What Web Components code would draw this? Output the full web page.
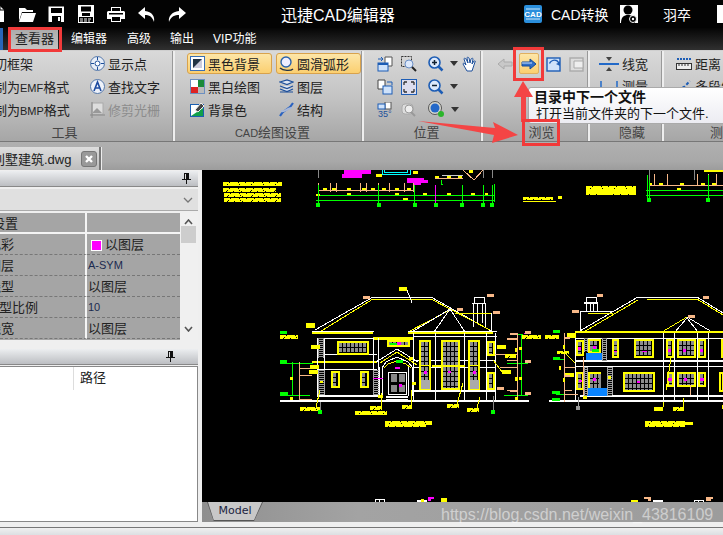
<!DOCTYPE html>
<html lang="zh">
<head>
<meta charset="utf-8">
<title>迅捷CAD编辑器</title>
<style>
    html, body { margin: 0; padding: 0; width: 723px; height: 535px; overflow: hidden; background: #e8e8e8; }
    body { font: 13px "Liberation Sans", "Noto Sans CJK SC", sans-serif; }
</style>
</head>
<body>
<cad-app></cad-app>
<script>
// Icons are plain svg strings, each one is dropped in a slot="icon".
const svg = (w, h, body) => `<svg slot="icon" width="${w}" height="${h}" viewBox="0 0 ${w} ${h}">${body}</svg>`;

const icons = {
    black: svg(15, 15, '<rect x=".5" y=".5" width="14" height="14" fill="#fff" stroke="#3a6fb5"/><rect x="3" y="3" width="9" height="9" fill="#234"/><path d="M3 12 12 3v9z" fill="#ccd"/>'),
    bw: svg(15, 15, '<rect x=".5" y=".5" width="14" height="14" fill="#fff" stroke="#6c8fc0"/><rect x="1" y="8" width="7" height="6" fill="#d22"/><rect x="8" y="1" width="6" height="7" fill="#1a8a3a"/><path d="M8 8h6v6H8z" fill="#bbb"/>'),
    bg: svg(15, 15, '<rect x=".5" y="2.5" width="13" height="12" fill="#fff" stroke="#1b5fb0"/><path d="M1 14 13 6v8z" fill="#12a04a"/><path d="M5 8 11 1l3 3-6 6z" fill="#444" stroke="#eee"/>'),
    smooth: svg(15, 16, '<path d="M1 12C4 15 12 15 14 13" fill="none" stroke="#234" stroke-width="1.4"/><circle cx="7" cy="6" r="5" fill="#eef" stroke="#2a62aa" stroke-width="1.4"/>'),
    layer: svg(15, 15, '<path d="M1 3 8 1l6 2-6 2.500zM1 7l7 2.500L14 7M1 10l7 2.500L14 10" fill="#dde6f5" stroke="#1d4f9a" stroke-width="1.300"/><path d="M1 13h13" stroke="#1d4f9a"/>'),
    dna: svg(15, 15, '<path d="M1 14C4 7 10 9 14 1" fill="none" stroke="#2a62c0" stroke-width="2"/><path d="M2 9C6 11 9 5 13 6" fill="none" stroke="#a8b8d8" stroke-width="2"/>'),
    point: svg(15, 15, '<circle cx="7.500" cy="7.500" r="7" fill="#e8eef8" stroke="#5578aa"/><circle cx="7.500" cy="7.500" r="2.500" fill="#fff" stroke="#1d4f9a"/><path d="M7.500 1v3M7.500 11v3M1 7.500h3M11 7.500h3" stroke="#1d4f9a"/>'),
    findText: svg(15, 15, '<circle cx="7.500" cy="7.500" r="7" fill="#eef2fa" stroke="#5578aa"/><path d="M4 12 7.500 3 11 12M5.500 9h4" fill="none" stroke="#1c4aa0" stroke-width="1.600"/>'),
    clip: svg(15, 16, '<rect x="2" y="1" width="11" height="11" fill="#ddd" stroke="#aaa"/><path d="M3 10 7 6l5 5H3z" fill="#999"/><path d="M0 13h15M2 0v16" stroke="#888"/>'),
    copy1: svg(16, 16, '<path d="M8 1h7v9H8z" fill="#fff" stroke="#555"/><rect x="1" y="7" width="10" height="8" fill="#cfe2fa" stroke="#1d5db5"/><rect x="1" y="7" width="10" height="2" fill="#1d5db5"/><path d="M1 3h5M4 1l2 2-2 2" fill="none" stroke="#1d5db5"/>'),
    zoomWin: svg(16, 16, '<rect x=".5" y=".5" width="10" height="10" fill="none" stroke="#333" stroke-dasharray="2 1"/><circle cx="8" cy="8" r="4" fill="#dce8fb" stroke="#6b8fc5"/><path d="m11 11 4 4" stroke="#222" stroke-width="2"/>'),
    zoomIn: svg(16, 16, '<circle cx="6.500" cy="6.500" r="5.500" fill="#dbe8fb" stroke="#1d5db5" stroke-width="1.600"/><path d="M4 6.500h5M6.500 4v5" stroke="#123" stroke-width="1.500"/><path d="m10.500 10.500 4 4" stroke="#1d5db5" stroke-width="2.500"/>'),
    zoomOut: svg(16, 16, '<circle cx="6.500" cy="6.500" r="5.500" fill="#dbe8fb" stroke="#1d5db5" stroke-width="1.600"/><path d="M4 6.500h5" stroke="#123" stroke-width="1.500"/><path d="m10.500 10.500 4 4" stroke="#1d5db5" stroke-width="2.500"/>'),
    hand: svg(16, 16, '<path d="M5 15 1 8c0-1 1-1 2 0l1 1-2-6c0-1 1-1 2 0l2 4-1-5c0-1 1-1 2 0l1 5 1-4c1-1 2-1 2 0l-1 5 2-3c1 0 2 0 1 1l-2 6-1 3z" fill="#fff" stroke="#1d4f9a"/>'),
    pages: svg(16, 16, '<path d="M1 1h7v9H1z" fill="#fff" stroke="#444"/><rect x="6" y="7" width="9" height="8" fill="#cfe2fa" stroke="#1d5db5"/><path d="M10 3h5v3" fill="none" stroke="#1d5db5"/>'),
    fit: svg(16, 16, '<rect x=".5" y=".5" width="15" height="15" fill="#dde" stroke="#1d5db5"/><path d="M3 3h3M3 3v3M13 3h-3M13 3v3M3 13h3M3 13v-3M13 13h-3M13 13v-3" stroke="#333" fill="none" stroke-width="1.300"/>'),
    deg: svg(16, 16, '<rect x="8" y="0" width="6" height="7" fill="#fff" stroke="#555"/><rect x="1" y="2" width="7" height="5" fill="#cfe2fa" stroke="#1d5db5"/><text x="1" y="15" font-size="9" fill="#1d4f9a">35°</text>'),
    zoomPrev: svg(16, 16, '<rect x="1" y="2" width="11" height="10" rx="3" fill="#ddd" stroke="#aaa"/><circle cx="8" cy="7" r="4" fill="#eee" stroke="#999"/><path d="m10 10 4 4" stroke="#999" stroke-width="2"/>'),
    globe: svg(17, 17, '<ellipse cx="7" cy="7" rx="6.500" ry="6.500" fill="#d8d8d0" stroke="#555"/><circle cx="7" cy="7" r="4.500" fill="#2468c8"/><circle cx="13" cy="13" r="3" fill="#2bb52b"/>'),
    left: svg(16, 12, '<path d="M1 6 7 1v3h8v4H7v3z" fill="#c8c8c8" stroke="#aaa"/>'),
    right: svg(16, 12, '<path d="M15 6 9 1v3H1v4h8v3z" fill="#2f6fc8" stroke="#124a9a"/><path d="M1 5h10" stroke="#cfe2fa"/>'),
    open: svg(15, 16, '<rect x="1" y="2" width="13" height="13" fill="#cfe2fa" stroke="#1d5db5" stroke-width="1.400"/><path d="M4 8c2-4 6-4 8-1l-2 1 4 2V5l-1 1C11 2 5 3 3 7z" fill="#1d5db5"/>'),
    close: svg(16, 16, '<rect x="1" y="2" width="13" height="13" fill="#ddd" stroke="#aaa" stroke-width="1.400"/><path d="M5 5h9v7H5z" fill="#eee" stroke="#aaa"/>'),
    lineW: svg(20, 14, '<path d="M0 7h20" stroke="#2269c8" stroke-width="2"/><path d="M7 0h6l-3 4zM7 14h6l-3-4z" fill="#444"/>'),
    measure: svg(20, 14, '<path d="M2 2v11h5M18 2v11h-5" fill="none" stroke="#2269c8" stroke-width="1.500"/>'),
    dist: svg(16, 15, '<path d="M1 3h14" stroke="#1d5db5" stroke-dasharray="2 1" stroke-width="2"/><rect x=".5" y="7.500" width="15" height="6" fill="#eee" stroke="#333"/><path d="M3 8v2M6 8v2M9 8v2M12 8v2" stroke="#333"/>'),
    multi: svg(16, 15, '<path d="M2 12 8 9l6-6" stroke="#1d5db5" fill="none" stroke-dasharray="3 2" stroke-width="2"/>')
};

class CadItem extends HTMLElement {
    constructor() {
        super();
        this.attachShadow({ mode: 'open' });
        this.shadowRoot.innerHTML = `
            <style>
                :host { display: flex; align-items: center; height: 21px; margin: 1px 0; box-sizing: border-box; padding-left: 3px; gap: 3px; white-space: nowrap; color: #222; border: 1px solid transparent; border-radius: 3px; font-size: 13px; }
                :host([on]) { background: linear-gradient(#fde6a8, #fbcf70); border-color: #d8a24c; }
                :host([off]) { color: #8c8c8c; }
                ::slotted(svg) { flex: none; display: block; }
                ::slotted(small) { font-size: 11px; }
            </style>
            <slot name="icon"></slot><span><slot></slot></span>
        `;
    }
}
customElements.define('cad-item', CadItem);

class CadGroup extends HTMLElement {
    constructor() {
        super();
        this.attachShadow({ mode: 'open' });
        this.shadowRoot.innerHTML = `
            <style>
                :host { display: flex; flex-direction: column; flex: none; box-sizing: border-box; border-right: 2px solid #eee; box-shadow: inset -1px 0 #999; overflow: hidden; }
                #body { flex: 1; padding-top: 1px; min-height: 0; }
                #label { height: 18px; line-height: 20px; text-align: center; color: #444; font-size: 13px; white-space: nowrap; }
                #label small { font-size: 11px; }
            </style>
            <div id="body"><slot></slot></div>
            <div id="label"></div>
        `;
    }

    connectedCallback() {
        const label = this.shadowRoot.getElementById('label');
        label.innerHTML = this.getAttribute('label').replace(/[A-Z]+/, '<small>$&</small>');
        // The groups are cropped or shifted in the shot, so the caption is off centre.
        label.style.paddingLeft = (this.getAttribute('pad-left') || 0) + 'px';
        label.style.paddingRight = (this.getAttribute('pad-right') || 0) + 'px';
    }
}
customElements.define('cad-group', CadGroup);

class CadTitlebar extends HTMLElement {
    constructor() {
        super();
        this.attachShadow({ mode: 'open' });
        this.shadowRoot.innerHTML = `
            <style>
                :host { display: flex; align-items: center; height: 28px; background: #030303; color: #fff; position: relative; overflow: hidden; }
                #quick { display: flex; align-items: center; margin-left: -13px; gap: 12px; flex: none; }
                #quick svg { display: block; }
                #title { flex: none; width: 114px; margin-left: 95px; font-size: 16px; white-space: nowrap; }
                #cad { margin-left: 129px; display: block; flex: none; }
                #conv { margin-left: 9px; width: 60px; font-size: 14px; white-space: nowrap; }
                #user { flex: none; margin-left: 9px; background: #fff; width: 18px; height: 18px; display: block; }
                #name { margin-left: 25px; font-size: 14px; width: 28px; white-space: nowrap; }
                #end { flex: none; margin-left: 26px; background: #fff; width: 6px; height: 18px; }
            </style>
            <div id="quick">
                <svg width="19" height="18" viewBox="0 0 19 18"><path d="M3 1h10l4 4v12H3z" fill="#fff"/><path d="M13 1v4h4" fill="none" stroke="#000"/></svg>
                <svg width="18" height="17" viewBox="0 0 18 17"><path d="M1 2h6l2 2h6v2H4L1 15z" fill="#fff"/><path d="M4 7h14l-3 9H1z" fill="#fff"/></svg>
                <svg width="17" height="17" viewBox="0 0 17 17"><rect x=".5" y=".5" width="15.500" height="15.500" fill="#fff"/><rect x="3" y="2" width="11" height="5" fill="#000"/><rect x="4" y="10" width="9" height="6" fill="#000"/><rect x="10" y="11" width="2" height="4" fill="#fff"/></svg>
                <svg width="18" height="18" viewBox="0 0 18 18"><rect x="1" y="0" width="16" height="18" fill="#fff"/><rect x="4" y="1.500" width="10" height="5" fill="#000"/><rect x="5" y="8" width="8" height="3" fill="#000"/><rect x="2" y="12" width="14" height="5" fill="#000"/><path d="M3 14h3M7 14h3M11 14h3M3 16h3M7 16h3M11 16h2" stroke="#fff"/></svg>
                <svg width="18" height="17" viewBox="0 0 18 17"><path d="M4 1h10v4h3l1 1v7h-4v3H4v-3H0V6l1-1h3z" fill="#fff"/><rect x="5" y="2" width="8" height="3" fill="#000"/><rect x="2" y="7" width="14" height="1.500" fill="#000"/><rect x="5" y="11" width="8" height="4" fill="#000"/></svg>
                <svg width="19" height="17" viewBox="0 0 19 17"><path d="M8 1 1 7l7 6V9c4 0 7 1 9 7 1-6-2-10-9-11z" fill="#fff"/></svg>
                <svg width="18" height="17" viewBox="0 0 18 17"><path d="M11 1l7 6-7 6V9C7 9 3 10 1 16 0 10 4 6 11 5z" fill="#fff"/></svg>
            </div>
            <div id="title">迅捷CAD编辑器</div>
            <svg id="cad" width="18" height="18" viewBox="0 0 18 18"><rect width="18" height="18" rx="2" fill="#2b8fdc"/><path d="M2 4h14M2 14h14" stroke="#cfe8fa"/><text x="9" y="12" text-anchor="middle" font-size="8" font-weight="bold" fill="#fff" font-family="Liberation Sans">CAD</text></svg>
            <div id="conv">CAD转换</div>
            <svg id="user" viewBox="0 0 18 18"><circle cx="8" cy="5" r="4.500" fill="#000"/><path d="M1 18c0-6 3-8 7-8s7 2 7 8z" fill="#000"/><circle cx="13" cy="14" r="3.500" fill="#000" stroke="#fff"/><circle cx="13" cy="14" r="1.200" fill="#fff"/></svg>
            <div id="name">羽卒</div>
            <div id="end"></div>
        `;
    }
}
customElements.define('cad-titlebar', CadTitlebar);

class CadTabs extends HTMLElement {
    constructor() {
        super();
        this.attachShadow({ mode: 'open' });
        this.shadowRoot.innerHTML = `
            <style>
                :host { display: flex; height: 22px; background: linear-gradient(#050505, #303030); color: #fff; font-size: 12px; line-height: 22px; }
                div { flex: none; white-space: nowrap; }
                #file { width: 3px; background: #2a66b8; }
                #view { width: 47px; margin-left: 8px; text-align: center; color: #222; font-size: 13px; background: linear-gradient(#aaa, #c4c4c4); border-radius: 2px 2px 0 0; }
                #edit { margin-left: 13px; }
                #adv { margin-left: 20px; }
                #out { margin-left: 19px; }
                #vip { margin-left: 19px; }
            </style>
            <div id="file"></div>
            <div id="view">查看器</div>
            <div id="edit">编辑器</div>
            <div id="adv">高级</div>
            <div id="out">输出</div>
            <div id="vip">VIP功能</div>
        `;
    }
}
customElements.define('cad-tabs', CadTabs);

class CadRibbon extends HTMLElement {
    constructor() {
        super();
        this.attachShadow({ mode: 'open' });
        this.shadowRoot.innerHTML = `
            <style>
                :host { display: flex; height: 92px; overflow: hidden; box-sizing: border-box; border-top: 1px solid #cfcfcf; border-bottom: 1px solid #777; background: linear-gradient(#d9d9d9, #c4c4c4 50%, #a6a6a6); }
                .tools { width: 175px; }
                .tools > div { display: grid; grid-template-columns: 86px 85px; }
                .cut { margin-left: -10px; }
                .cut2 { margin-left: -23px; }
                .cad { width: 189px; }
                .cad > div { display: grid; grid-template-columns: 85px 85px; column-gap: 4px; padding-left: 12px; }
                .cad cad-item { padding-left: 2px; }
                .pos { width: 119px; }
                .pos > div { display: grid; grid-template-columns: 24px 24px 38px 22px; padding-left: 9px; }
                .pos span { display: flex; align-items: center; justify-content: center; height: 23px; }
                .pos span.dd { justify-content: flex-start; gap: 6px; padding-left: 7px; }
                .pos i { width: 0; height: 0; border: 4px solid transparent; border-top: 5px solid #333; border-bottom: 0; }
                .browse { width: 107px; }
                .browse > div { display: grid; grid-template-columns: repeat(4, 24px); padding-left: 10px; }
                .browse span { display: flex; align-items: center; justify-content: center; height: 21px; margin: 1px 2px; border: 1px solid transparent; box-sizing: border-box; }
                .browse span.on { background: linear-gradient(#fde6a8, #fbcf70); border-color: #e0b060; border-radius: 2px; }
                .hide { width: 74px; }
                .hide cad-item { padding-left: 8px; }
                .meas { width: 118px; border-right: 0; }
                .meas cad-item { padding-left: 11px; }
            </style>
            <cad-group class="tools" label="工具" pad-right="44"><div>
                <cad-item class="cut">切框架</cad-item>
                <cad-item>${icons.point}显示点</cad-item>
                <cad-item class="cut2">复制为<small>EMF</small>格式</cad-item>
                <cad-item>${icons.findText}查找文字</cad-item>
                <cad-item class="cut2">复制为<small>BMP</small>格式</cad-item>
                <cad-item off>${icons.clip}修剪光栅</cad-item>
            </div></cad-group>
            <cad-group class="cad" label="CAD绘图设置" pad-left="8"><div>
                <cad-item on>${icons.black}黑色背景</cad-item>
                <cad-item on>${icons.smooth}圆滑弧形</cad-item>
                <cad-item>${icons.bw}黑白绘图</cad-item>
                <cad-item>${icons.layer}图层</cad-item>
                <cad-item>${icons.bg}背景色</cad-item>
                <cad-item>${icons.dna}结构</cad-item>
            </div></cad-group>
            <cad-group class="pos" label="位置" pad-left="8"><div>
                <span>${icons.copy1}</span><span>${icons.zoomWin}</span><span class="dd">${icons.zoomIn}<i></i></span><span>${icons.hand}</span>
                <span>${icons.pages}</span><span>${icons.fit}</span><span class="dd">${icons.zoomOut}<i></i></span><span></span>
                <span>${icons.deg}</span><span>${icons.zoomPrev}</span><span class="dd">${icons.globe}<i></i></span><span></span>
            </div></cad-group>
            <cad-group class="browse" label="浏览" pad-left="12"><div>
                <span>${icons.left}</span><span class="on">${icons.right}</span><span>${icons.open}</span><span>${icons.close}</span>
            </div></cad-group>
            <cad-group class="hide" label="隐藏" pad-left="12">
                <cad-item>${icons.lineW}线宽</cad-item>
                <cad-item>${icons.measure}测量</cad-item>
            </cad-group>
            <cad-group class="meas" label="测量">
                <cad-item>${icons.dist}距离</cad-item>
                <cad-item>${icons.multi}多段线</cad-item>
            </cad-group>
        `;
    }
}
customElements.define('cad-ribbon', CadRibbon);

class CadDocTabs extends HTMLElement {
    constructor() {
        super();
        this.attachShadow({ mode: 'open' });
        this.shadowRoot.innerHTML = `
            <style>
                :host { display: flex; align-items: flex-end; height: 28px; background: linear-gradient(#b0b0b0, #a8a8a8 70%, #9c9c9c); overflow: hidden; }
                #tab { display: flex; align-items: center; width: 101px; height: 23px; box-sizing: border-box; background: linear-gradient(#ddd, #bdbdbd); border-right: 2px solid #777; box-shadow: 1px 0 #eee; white-space: nowrap; color: #222; font-size: 13px; }
                #txt { flex: none; width: 83px; margin-left: -8px; }
                #x { flex: none; width: 16px; height: 16px; margin-left: 6px; box-sizing: border-box; border: 1px solid #777; border-radius: 3px; background: #999; display: flex; align-items: center; justify-content: center; }
            </style>
            <div id="tab">
                <span id="txt">别墅建筑.dwg</span>
                <span id="x"><svg width="10" height="10" viewBox="0 0 10 10"><path d="M2 2l6 6M8 2 2 8" stroke="#fff" stroke-width="2.400"/></svg></span>
            </div>
        `;
    }
}
customElements.define('cad-doctabs', CadDocTabs);

// A thin title strip with a pin, used twice in the left column.
class CadPaneHead extends HTMLElement {
    constructor() {
        super();
        this.attachShadow({ mode: 'open' });
        this.shadowRoot.innerHTML = `
            <style>
                :host { display: flex; justify-content: flex-end; align-items: center; height: 15px; background: linear-gradient(#eceef0, #bcbec2); border-bottom: 1px solid #888; box-sizing: content-box; }
            </style>
            <svg width="9" height="11" viewBox="0 0 9 11" style="display:block"><path d="M2 0h5v6h2v1H5v4H4V7H0V6h2z" fill="#111"/><rect x="3" y="1" width="1" height="5" fill="#ddd"/></svg>
        `;
    }

    connectedCallback() {
        this.style.paddingRight = (this.getAttribute('pin') || 7) + 'px';
    }
}
customElements.define('cad-panehead', CadPaneHead);

class CadProps extends HTMLElement {
    constructor() {
        super();
        this.attachShadow({ mode: 'open' });
        this.shadowRoot.innerHTML = `
            <style>
                :host { display: grid; grid-template-columns: 180px 17px; height: 127px; background: #f0f0f0; overflow: hidden; }
                #rows { display: grid; grid-template-columns: 87px 93px; grid-auto-rows: 21px; background: #a5a5a5; color: #222; font-size: 13px; }
                #rows div { box-sizing: border-box; border-bottom: 1px dashed #777; line-height: 21px; white-space: nowrap; overflow: hidden; }
                #rows div:nth-child(odd) { border-right: 2px solid #f4f4f4; }
                #rows div:nth-child(odd) span { margin-left: -12px; }
                #rows .head { border-bottom: 2px solid #f4f4f4; }
                #rows div.s span { margin-left: -34px; }
                #rows div:nth-child(even) { padding-left: 1px; }
                .sw { display: inline-block; vertical-align: -2px; width: 9px; height: 9px; margin: 0 3px 0 3px; border: 1px solid #fff; background: #f0f; }
                .n { font-size: 11px; color: #1c2a50; }
                #bar { display: flex; flex-direction: column; align-items: center; }
                #thumb { width: 15px; height: 17px; background: #cdcdcd; margin-top: 1px; }
                #bar svg { display: block; margin-top: 6px; }
                #bar svg:last-child { margin-top: 83px; }
            </style>
            <div id="rows">
                <div class="head s"><span>颜色设置</span></div><div class="head"></div>
                <div><span>色彩</span></div><div><i class="sw"></i>以图层</div>
                <div><span>图层</span></div><div class="n">A-SYM</div>
                <div><span>线型</span></div><div>以图层</div>
                <div><span style="margin-left:-14px">线型比例</span></div><div class="n">10</div>
                <div><span>线宽</span></div><div>以图层</div>
            </div>
            <div id="bar">
                <svg width="9" height="6" viewBox="0 0 9 6"><path d="M1 5 4.500 1 8 5" fill="none" stroke="#555" stroke-width="1.600"/></svg>
                <div id="thumb"></div>
                <svg width="9" height="6" viewBox="0 0 9 6"><path d="M1 1 4.500 5 8 1" fill="none" stroke="#555" stroke-width="1.600"/></svg>
            </div>
        `;
    }
}
customElements.define('cad-props', CadProps);

class CadLeft extends HTMLElement {
    constructor() {
        super();
        this.attachShadow({ mode: 'open' });
        this.shadowRoot.innerHTML = `
            <style>
                :host { display: flex; flex-direction: column; width: 198px; box-sizing: border-box; padding-top: 1px; background: #efefef; }
                #combo { height: 22px; margin: 2px 0; display: flex; justify-content: flex-end; align-items: center; padding-right: 5px; background: #e0e0e0; border-bottom: 1px solid #aaa; box-sizing: border-box; }
                cad-panehead.second { margin-top: 9px; }
                #list { flex: 1; margin-top: 1px; background: #fff; border: 1px solid #888; border-left: 0; display: flex; align-items: flex-start; }
                #list span { margin: 0 0 0 73px; padding-left: 6px; height: 23px; line-height: 22px; border-left: 1px solid #ddd; font-size: 13px; color: #222; }
            </style>
            <cad-panehead pin="7"></cad-panehead>
            <div id="combo"><svg width="10" height="6" viewBox="0 0 10 6"><path d="M1 1 5 5 9 1" fill="none" stroke="#777" stroke-width="1.300"/></svg></div>
            <cad-props></cad-props>
            <cad-panehead class="second" pin="23"></cad-panehead>
            <div id="list"><span>路径</span></div>
        `;
    }
}
customElements.define('cad-left', CadLeft);

// The drawing: coordinates are read from 3x crops, so each part has its own origin.
class CadDrawing extends HTMLElement {
    constructor() {
        super();
        this.attachShadow({ mode: 'open' });
        this.out = [];
        this.top();
        this.houseA();
        this.houseB();
        this.bottom();
        this.shadowRoot.innerHTML = `
            <style>
                :host { display: block; height: 332px; background: #000; overflow: hidden; }
                svg { display: block; }
            </style>
            <svg width="521" height="332" viewBox="202 170 521 332" shape-rendering="crispEdges">${this.out.join('')}</svg>
        `;
    }

    at(x, y) { this.ox = x; this.oy = y; }

    line(c, pts, w = 1) {
        const p = pts.map((v, i) => Math.round(i % 2 ? this.oy + v / 3 : this.ox + v / 3));
        let s = '';
        for (let i = 0; i < p.length; i += 2) s += p[i] + ',' + p[i + 1] + ' ';
        this.out.push(`<polyline points="${s}" fill="none" stroke="${c}" stroke-width="${w}"/>`);
    }

    box(c, x, y, w, h) {
        this.out.push(`<rect x="${Math.round(this.ox + x / 3)}" y="${Math.round(this.oy + y / 3)}" width="${Math.max(1, Math.round(w / 3))}" height="${Math.max(1, Math.round(h / 3))}" fill="${c}"/>`);
    }

    boxes(c, list) {
        list.forEach(b => this.box(c, b[0], b[1], b[2], b[3]));
    }

    // Yellow note text: a filled block with bites out of its edges, it reads as tiny letters at this zoom.
    notes(list) {
        list.forEach(b => {
            this.box('#ff0', b[0], b[1], b[2], b[3]);
            if (b[2] < 30) return;
            for (let i = 9, n = 0; i < b[2] - 3; i += 9 + (n % 3) * 3, n++) {
                this.box('#000', b[0] + i, n % 2 ? b[1] : b[1] + b[3] - 3, 3, 3);
                if (b[3] > 11 && n % 3 == 0) this.box('#000', b[0] + i + 3, b[1] + 6, 3, 3);
            }
        });
    }

    win(x, y, w, h) {
        this.box('#ff0', x, y, w, h);
        this.box('#000', x + 6, y + 6, w - 12, h - 12);
        for (let i = x + 6; i < x + w - 9; i += 12) this.box('#8c8c8c', i, y + 6, 9, h - 12);
        for (let j = y + 18; j < y + h - 9; j += 15) this.box('#000', x + 6, j, w - 12, 3);
    }

    ladder(x, y, w, h) {
        this.line('#aaa', [x, y, x, y + h]);
        this.line('#aaa', [x + w, y, x + w, y + h]);
        for (let j = y; j < y + h; j += 6) this.line('#999', [x, j, x + w, j]);
    }

    pin(c, x, y) {
        this.box(c, x - 6, y - 6, 13, 13);
    }

    top() {
        const G = '#0f0', P = '#f8b888', Y = '#ff0', M = '#f0f';
        this.at(200, 165);
        // title blocks
        this.notes([[68, 52, 178, 13], [70, 68, 160, 13], [72, 84, 170, 13], [72, 99, 170, 13], [970, 96, 90, 10], [1158, 64, 150, 26]]);
        this.boxes(Y, [[1075, 94, 12, 10], [1190, 88, 30, 4]]);
        this.line(Y, [968, 108, 1068, 108]);
        // left elevation, bottom of the plan
        this.boxes(M, [[432, 15, 80, 12], [426, 27, 60, 11], [622, 40, 50, 15], [640, 55, 25, 5], [668, 44, 14, 10]]);
        this.line('#0ff', [545, 15, 545, 28, 630, 28, 630, 15]);
        this.line('#0ff', [552, 15, 552, 20, 622, 20, 622, 15]);
        this.boxes(Y, [[528, 28, 18, 10], [706, 33, 12, 6], [742, 33, 12, 6], [775, 33, 12, 6], [640, 18, 14, 8], [806, 15, 12, 8]]);
        this.line('#ccc', [725, 30, 790, 30]);
        this.line(P, [705, 40, 788, 40]);
        this.line(P, [790, 15, 822, 45, 850, 15]);
        this.line(P, [354, 76, 644, 76]);
        [354, 390, 408, 480, 498, 535, 568, 612, 640].forEach(x => this.line(P, [x, 55, x, 80]));
        this.boxes(Y, [[368, 69, 12, 7], [396, 69, 12, 7], [441, 69, 12, 7], [485, 69, 12, 7], [513, 69, 12, 7], [546, 69, 12, 7], [585, 69, 12, 7], [622, 69, 12, 7]]);
        this.line(G, [350, 91, 884, 91]);
        this.line(G, [348, 106, 884, 106]);
        this.boxes(Y, [[441, 84, 12, 7], [585, 84, 12, 7], [669, 84, 12, 7], [741, 84, 12, 7], [812, 84, 12, 7], [856, 84, 10, 7], [610, 99, 14, 7], [348, 87, 12, 5]]);
        [354, 535, 643, 706, 786, 849, 876].forEach(x => {
            this.line(x == 706 ? M : G, [x, 60, x, 115]);
            this.pin(G, x + 1, 120);
        });
        this.line(G, [882, 58, 882, 110]);
        this.line('#888', [355, 15, 355, 38]);
        this.line('#888', [849, 15, 849, 40]);
        this.line('#888', [876, 15, 876, 38]);
        this.line(G, [722, 45, 722, 58, 730, 58]);
        // right elevation, bottom of the plan
        this.line(P, [1348, 60, 1568, 60]);
        [1362, 1400, 1490, 1524, 1548].forEach(x => this.line(P, [x, 28, x, 60]));
        this.boxes(Y, [[1348, 54, 10, 6], [1376, 54, 12, 6], [1440, 54, 12, 6], [1502, 54, 12, 6], [1535, 54, 12, 6], [1430, 69, 12, 7], [1512, 15, 56, 6]]);
        this.line(G, [1338, 76, 1568, 76]);
        this.line(G, [1338, 91, 1568, 91]);
        [1341, 1348, 1524].forEach(x => this.line(G, [x, 30, x, 100]));
        this.pin(G, 1347, 105);
        this.pin(G, 1525, 105);
        this.line('#888', [1347, 15, 1347, 46]);
        this.line('#888', [1482, 15, 1482, 45]);
    }

    houseA() {
        const W = '#fff', G = '#0f0', P = '#f8b888', Y = '#ff0', M = '#f0f';
        this.at(280, 270);
        // roof
        this.line(W, [105, 180, 280, 82, 452, 82, 640, 185]);
        this.line(Y, [115, 188, 280, 88, 452, 88, 630, 180]);
        this.line(Y, [385, 185, 510, 120]);
        this.line(W, [462, 185, 510, 118, 555, 185]);
        this.line(W, [510, 118, 395, 185]);
        // chimney
        this.line(W, [578, 100, 578, 170]);
        this.line(W, [616, 100, 616, 170]);
        this.line(W, [590, 100, 590, 160]);
        this.line(W, [606, 100, 606, 160]);
        this.line(W, [576, 100, 618, 100]);
        this.line(W, [582, 100, 582, 82, 612, 82, 612, 100]);
        this.line(Y, [525, 128, 632, 128]);
        this.line(W, [632, 128, 632, 185]);
        // eaves and walls
        this.line(W, [97, 183, 281, 183]);
        this.box(Y, 97, 186, 184, 5);
        this.line(W, [112, 205, 400, 205]);
        this.box(Y, 280, 200, 120, 9);
        this.line(W, [385, 183, 650, 183]);
        this.box(Y, 385, 186, 255, 5);
        this.line(W, [400, 197, 650, 197]);
        this.line(W, [130, 253, 292, 253]);
        this.box(Y, 97, 273, 195, 6);
        this.line(W, [112, 298, 290, 298]);
        this.box(W, 110, 376, 190, 5);
        [112, 132, 280, 293].forEach(x => this.line(W, [x, 205, x, 376]));
        [400, 465, 553, 618, 646].forEach(x => this.line(W, [x, 190, x, 390]));
        [270, 290].forEach(y => this.line(W, [400, y, 646, y]));
        this.box(W, 400, 360, 246, 5);
        this.box(Y, 455, 286, 100, 5);
        this.ladder(115, 205, 13, 60);
        this.ladder(115, 300, 17, 75);
        this.ladder(280, 300, 17, 75);
        [[170, 212, 95, 43], [320, 210, 68, 22], [418, 210, 37, 150], [482, 210, 57, 150], [565, 210, 37, 150], [620, 212, 25, 45], [620, 305, 25, 55], [153, 303, 27, 50], [240, 303, 27, 50]].forEach(w => this.win(w[0], w[1], w[2], w[3]));
        this.boxes('#aaa', [[424, 330, 26, 28], [570, 330, 26, 28]]);
        this.boxes(Y, [[482, 285, 57, 6], [418, 285, 37, 4], [565, 285, 37, 4]]);
        // porch
        this.line(W, [288, 275, 350, 237, 415, 275]);
        this.line(Y, [300, 280, 350, 245, 410, 285]);
        this.line(W, [305, 295, 318, 275, 350, 262, 385, 275, 400, 295]);
        this.line(Y, [312, 295, 325, 282, 350, 272, 378, 282, 392, 295]);
        this.box(W, 325, 306, 58, 68);
        this.box('#000', 328, 309, 52, 62);
        this.boxes('#888', [[332, 312, 18, 24], [358, 312, 18, 24], [332, 345, 18, 22], [358, 345, 18, 22]]);
        [296, 305, 385, 396].forEach(x => this.line(W, [x, 290, x, 378]));
        this.box(W, 318, 378, 66, 5);
        this.line(W, [318, 388, 384, 388]);
        // ground
        this.box(W, 0, 390, 720, 6);
        // dimensions
        this.line(G, [37, 277, 37, 378]);
        this.line(G, [0, 280, 100, 280]);
        this.line(G, [0, 376, 90, 376]);
        this.line(P, [58, 277, 58, 390]);
        this.line(P, [58, 295, 112, 295]);
        this.line(P, [58, 316, 95, 316]);
        this.line(P, [58, 388, 95, 388]);
        this.line(P, [712, 190, 712, 390]);
        this.line(P, [645, 252, 712, 252]);
        this.line(P, [680, 270, 712, 270]);
        this.line(P, [660, 292, 712, 292]);
        this.line(P, [680, 360, 712, 360]);
        this.line(G, [680, 280, 720, 280]);
        this.line(G, [672, 376, 720, 376]);
        this.line(G, [700, 192, 720, 192]);
        // notes
        this.notes([[0, 195, 53, 12], [78, 160, 27, 14], [92, 225, 28, 12], [90, 285, 27, 12], [88, 300, 27, 12], [650, 225, 28, 12], [675, 252, 32, 12], [665, 300, 28, 12], [60, 410, 60, 12], [270, 408, 35, 12], [365, 405, 30, 12], [500, 402, 35, 12], [560, 413, 35, 12], [225, 424, 95, 13], [315, 452, 122, 18], [437, 452, 19, 12], [358, 50, 25, 12]]);
        this.boxes(Y, [[30, 322, 8, 10], [30, 380, 8, 8], [705, 235, 10, 12], [705, 320, 10, 12], [705, 380, 10, 10], [120, 334, 10, 6], [388, 260, 12, 8], [295, 375, 15, 8], [395, 335, 12, 8]]);
        this.boxes(P, [[248, 78, 20, 8], [620, 72, 20, 8], [530, 113, 18, 10], [638, 124, 20, 8], [652, 352, 20, 8], [682, 204, 30, 6]]);
        this.boxes(G, [[0, 183, 22, 8], [0, 270, 22, 8], [0, 365, 25, 10], [348, 270, 20, 8], [330, 220, 22, 6]]);
        this.boxes(M, [[350, 215, 12, 9], [433, 303, 10, 9], [503, 303, 9, 6], [578, 303, 8, 9], [280, 323, 30, 4], [345, 292, 14, 6], [356, 342, 8, 10]]);
        this.line(W, [380, 60, 396, 98]);
        this.line(Y, [120, 360, 108, 410]);
        this.line(Y, [302, 370, 302, 408]);
        this.line(Y, [396, 360, 392, 405]);
        this.line(Y, [550, 340, 532, 402]);
        this.line(Y, [600, 380, 592, 413]);
        this.line(Y, [640, 270, 668, 310]);
        this.line('#888', [120, 396, 120, 420]);
        this.line('#888', [640, 378, 640, 420]);
        this.pin(G, 121, 425);
        this.pin(G, 640, 425);
    }

    houseB() {
        const W = '#fff', G = '#0f0', P = '#f8b888', Y = '#ff0', M = '#f0f', B = '#0a84ff';
        this.at(510, 270);
        // roof
        this.line(W, [205, 185, 385, 82, 560, 82, 639, 128]);
        this.line(Y, [215, 188, 385, 90]);
        this.line(Y, [410, 88, 560, 88, 639, 134]);
        this.line(Y, [455, 185, 530, 140]);
        this.line(W, [530, 140, 605, 185]);
        this.line(W, [495, 185, 530, 143, 565, 185]);
        // chimney
        this.line(W, [228, 98, 228, 82, 258, 82, 258, 98]);
        this.box(W, 222, 96, 42, 6);
        [228, 240, 250, 260].forEach(x => this.line(W, [x, 100, x, 124]));
        this.line(W, [210, 124, 310, 124]);
        this.line(Y, [235, 130, 310, 130]);
        this.line(W, [210, 124, 210, 190]);
        // walls
        this.box(Y, 195, 184, 444, 6);
        this.line(W, [195, 205, 639, 205]);
        this.box(W, 195, 269, 444, 5);
        this.line(W, [195, 289, 639, 289]);
        this.box(W, 210, 375, 429, 5);
        [195, 460, 493, 562, 593].forEach(x => this.line(W, [x, 190, x, 392]));
        [[197, 210, 23, 47], [235, 208, 38, 42], [307, 208, 22, 58], [373, 208, 60, 58], [468, 208, 23, 58], [500, 208, 57, 58], [563, 208, 24, 58], [633, 208, 8, 58], [197, 305, 25, 55], [235, 305, 40, 55], [338, 305, 95, 60], [470, 305, 22, 45], [500, 305, 57, 45], [563, 305, 24, 45], [627, 305, 12, 60]].forEach(w => this.win(w[0], w[1], w[2], w[3]));
        this.boxes(B, [[228, 250, 47, 20], [232, 353, 60, 23]]);
        this.ladder(275, 205, 12, 67);
        this.ladder(222, 205, 10, 40);
        this.ladder(292, 290, 13, 85);
        this.ladder(222, 290, 10, 85);
        this.boxes(M, [[204, 232, 9, 9], [250, 228, 8, 8], [474, 237, 10, 8], [520, 237, 10, 8], [570, 237, 10, 8], [250, 323, 8, 8], [474, 323, 12, 10], [522, 323, 10, 10], [570, 323, 12, 10], [380, 333, 9, 6], [312, 243, 8, 3], [395, 243, 14, 3], [42, 189, 12, 4], [207, 330, 8, 6]]);
        this.box(G, 247, 238, 20, 9);
        // ground
        this.box(W, 0, 390, 57, 6);
        this.box(W, 117, 390, 522, 6);
        // dimensions
        this.line(G, [33, 195, 33, 378]);
        this.line(G, [0, 192, 38, 192]);
        this.line(G, [0, 280, 55, 280]);
        this.line(G, [0, 376, 55, 376]);
        this.line(P, [20, 190, 20, 390]);
        this.line(P, [0, 205, 20, 205]);
        this.line(P, [0, 362, 20, 362]);
        this.line(P, [163, 190, 163, 395]);
        this.line(P, [163, 290, 195, 290]);
        this.line(P, [163, 360, 185, 360]);
        this.line(P, [163, 372, 205, 372]);
        this.line(P, [218, 260, 218, 375]);
        this.line(Y, [165, 250, 195, 280]);
        this.notes([[36, 195, 57, 12], [105, 196, 42, 11], [140, 243, 35, 10], [165, 308, 27, 12], [170, 190, 27, 14], [432, 410, 27, 12], [488, 410, 33, 12], [405, 452, 120, 18], [525, 455, 24, 10]]);
        this.boxes(Y, [[0, 252, 18, 12], [15, 320, 8, 12], [27, 232, 8, 10], [27, 322, 8, 10], [148, 288, 6, 12], [158, 225, 6, 12], [158, 325, 6, 12], [15, 382, 8, 8], [220, 378, 12, 10], [295, 318, 10, 8], [635, 405, 4, 12]]);
        this.boxes(G, [[130, 180, 20, 8], [130, 262, 20, 8], [127, 364, 25, 8], [125, 385, 25, 8], [138, 268, 25, 4], [138, 372, 25, 4]]);
        this.boxes(P, [[45, 183, 18, 8], [45, 270, 18, 8], [45, 366, 18, 8], [187, 120, 20, 10], [262, 72, 18, 10], [578, 78, 18, 10], [535, 135, 20, 10], [0, 190, 20, 6], [165, 200, 15, 6], [165, 315, 15, 6]]);
        this.line('#999', [205, 380, 205, 410]);
        this.pin('#999', 205, 413);
        this.line(Y, [460, 395, 460, 410]);
        this.line(Y, [520, 385, 520, 410]);
        this.line(Y, [482, 265, 468, 360]);
        this.line(P, [540, 345, 540, 375]);
    }

    bottom() {
        this.at(200, 440);
        this.box('#fff', 525, 177, 30, 2);
        this.box('#fff', 1481, 181, 30, 2);
        this.boxes('#fff', [[526, 177, 3, 9], [538, 177, 3, 9], [552, 177, 3, 9], [1481, 181, 3, 6], [1495, 181, 3, 6], [1508, 181, 3, 6], [650, 181, 30, 6], [1360, 179, 30, 8]]);
        this.boxes('#ff0', [[722, 174, 18, 12], [1292, 180, 20, 7], [664, 178, 10, 8]]);
        this.boxes('#f0f', [[684, 172, 18, 6], [684, 178, 8, 6]]);
        this.boxes('#f8b888', [[1332, 172, 22, 6], [1345, 178, 10, 6], [1518, 172, 22, 6], [1518, 178, 14, 6]]);
    }
}
customElements.define('cad-drawing', CadDrawing);

class CadBottom extends HTMLElement {
    constructor() {
        super();
        this.attachShadow({ mode: 'open' });
        this.shadowRoot.innerHTML = `
            <style>
                :host { display: flex; height: 20px; background: linear-gradient(90deg, #8f8f8f, #a3a3a3 30%, #9c9c9c); overflow: hidden; }
                #edge { flex: none; width: 56px; height: 19px; margin-left: 5px; background: #555; clip-path: polygon(0 0, 100% 0, 84% 100%, 12% 100%); }
                #model { height: 18px; text-align: center; font: 11px/17px "DejaVu Sans", sans-serif; color: #1a2340; background: #c8c8c8; clip-path: polygon(1px 0, calc(100% - 1px) 0, 84% 100%, 12% 100%); }
            </style>
            <div id="edge"><div id="model">Model</div></div>
        `;
    }
}
customElements.define('cad-bottom', CadBottom);

// Red marks from the person who took the screenshot, plus the hover tooltip.
class CadMarks extends HTMLElement {
    constructor() {
        super();
        this.attachShadow({ mode: 'open' });
        this.shadowRoot.innerHTML = `
            <style>
                :host { position: absolute; inset: 0; display: block; pointer-events: none; }
                .red { position: absolute; box-sizing: border-box; border: 3px solid #f23a3a; }
                #tip { position: absolute; left: 528px; top: 87px; width: 200px; height: 37px; box-sizing: border-box; padding: 1px 0 0 5px; background: linear-gradient(#fff, #ececf2); border: 1px solid #aaa; border-radius: 3px; color: #111; white-space: nowrap; }
                #tip b { display: block; font-size: 14px; line-height: 17px; }
                #tip span { display: block; font-size: 13px; line-height: 16px; padding-left: 2px; }
                #arrows { position: absolute; left: 0; top: 0; display: block; }
                #mark { position: absolute; left: 441px; top: 506px; font: 16px "Liberation Sans", sans-serif; color: rgba(255, 255, 255, .5); white-space: nowrap; }
            </style>
            <div id="tip"><b>目录中下一个文件</b><span>打开当前文件夹的下一个文件.</span></div>
            <svg id="arrows" width="723" height="535" viewBox="0 0 723 535">
                <path d="M523 81 533 97H526V122H521V97H514Z" fill="#f44545"/>
                <path d="M418 121 495 128 493 122 518 135 492 143 494 135Z" fill="#f44545"/>
            </svg>
            <div class="red" style="left:8px;top:27px;width:54px;height:25px"></div>
            <div class="red" style="left:513px;top:47px;width:31px;height:34px"></div>
            <div class="red" style="left:522px;top:119px;width:38px;height:27px"></div>
            <div id="mark">https://blog.csdn.net/weixin_43816109</div>
        `;
    }
}
customElements.define('cad-marks', CadMarks);

class CadApp extends HTMLElement {
    constructor() {
        super();
        this.attachShadow({ mode: 'open' });
        this.shadowRoot.innerHTML = `
            <style>
                :host { display: flex; flex-direction: column; position: relative; width: 723px; height: 535px; overflow: hidden; background: #efefef; font: 13px "Liberation Sans", "Noto Sans CJK SC", sans-serif; }
                #main { display: grid; grid-template-columns: 198px 521px; column-gap: 4px; height: 352px; background: #efefef; }
                #right { display: flex; flex-direction: column; }
                #foot { flex: 1; margin-top: 5px; border-top: 1px solid #777; background: linear-gradient(#f0f0f0, #dcdfe2); }
            </style>
            <cad-titlebar></cad-titlebar>
            <cad-tabs></cad-tabs>
            <cad-ribbon></cad-ribbon>
            <cad-doctabs></cad-doctabs>
            <div id="main">
                <cad-left></cad-left>
                <div id="right">
                    <cad-drawing></cad-drawing>
                    <cad-bottom></cad-bottom>
                </div>
            </div>
            <div id="foot"></div>
            <cad-marks></cad-marks>
        `;
    }
}
customElements.define('cad-app', CadApp);
</script>
</body>
</html>
